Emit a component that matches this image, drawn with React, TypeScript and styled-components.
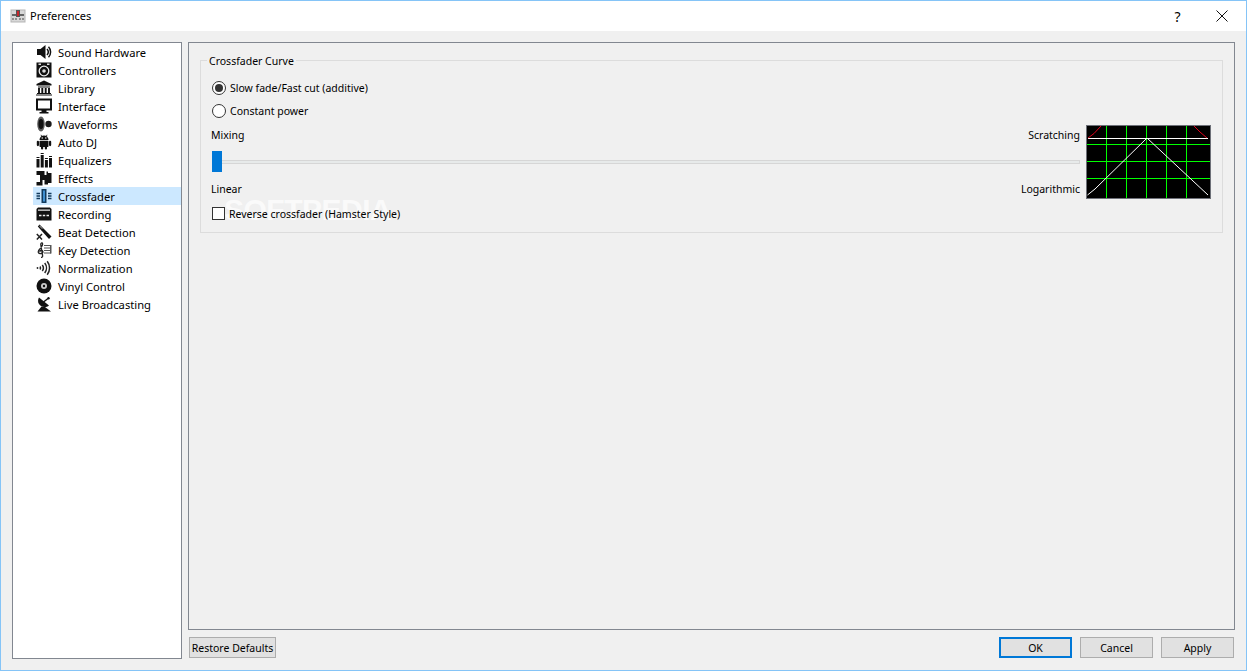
import React from 'react';
import styled, { createGlobalStyle } from 'styled-components';

const GlobalStyle = createGlobalStyle`
  html, body {
    margin: 0;
    padding: 0;
    background: #f0f0f0;
  }
  * {
    box-sizing: border-box;
  }
`;

const Window = styled.div`
  width: 1247px;
  height: 671px;
  display: flex;
  flex-direction: column;
  border: 1px solid #85c4f7;
  background: #f0f0f0;
  color: #000;
  font-family: 'Noto Sans', 'Open Sans', sans-serif;
  font-size: 10.5px;
  overflow: hidden;
`;

const TitleBar = styled.div`
  height: 30px;
  flex: none;
  display: flex;
  align-items: center;
  background: #fff;
  padding: 0 2px 0 9px;
`;

const TitleText = styled.span`
  margin: 0 0 2px 4px;
  flex: 1;
  font-size: 11px;
`;

const TitleButton = styled.div<{ $narrow?: boolean }>`
  width: ${({ $narrow }) => ($narrow ? '43px' : '45px')};
  height: 30px;
  display: flex;
  align-items: center;
  justify-content: center;
  font-size: 14px;
`;

const Body = styled.div`
  flex: 1;
  display: flex;
  gap: 6px;
  padding: 11px;
  min-height: 0;
`;

const TreeList = styled.div`
  width: 170px;
  flex: none;
  background: #fff;
  border: 1px solid #828790;
  font-size: 11.2px;
`;

const TreeRow = styled.div<{ $selected?: boolean }>`
  height: 18px;
  margin-left: 20px;
  padding-left: 3px;
  display: flex;
  align-items: center;
  gap: 6px;
  background: ${({ $selected }) => ($selected ? '#cce8ff' : 'transparent')};
`;

const RowIcon = styled.svg`
  width: 16px;
  height: 16px;
  flex: none;
  display: block;
`;

const RowLabel = styled.span`
  white-space: nowrap;
`;

const RightColumn = styled.div`
  flex: 1;
  display: flex;
  flex-direction: column;
  gap: 7px;
  min-width: 0;
`;

const Panel = styled.div`
  flex: 1;
  border: 1px solid #828790;
  padding: 17px 11px 0;
`;

const GroupBox = styled.div`
  position: relative;
  height: 173px;
  border: 1px solid #dcdcdc;
  padding: 15px 11px 0 10px;
`;

const GroupTitle = styled.span`
  position: absolute;
  top: -8px;
  left: 6px;
  padding: 0 2px;
  line-height: 16px;
  background: #f0f0f0;
`;

const Watermark = styled.span`
  position: absolute;
  left: 23px;
  top: 137px;
  font-family: 'Liberation Sans', sans-serif;
  font-weight: 700;
  font-size: 30px;
  line-height: 24px;
  letter-spacing: -0.5px;
  color: rgba(255, 255, 255, 0.7);
  pointer-events: none;
`;

const OptionRow = styled.div`
  height: 23px;
  display: flex;
  align-items: center;
  gap: 4px;
  margin-left: 1px;
`;

const RadioCircle = styled.span<{ $checked?: boolean }>`
  width: 14px;
  height: 14px;
  flex: none;
  display: flex;
  align-items: center;
  justify-content: center;
  border-radius: 50%;
  border: 1px solid #333;
  background: #fff;

  &::after {
    content: '';
    width: 8px;
    height: 8px;
    border-radius: 50%;
    background: #333;
    display: ${({ $checked }) => ($checked ? 'block' : 'none')};
  }
`;

const CurveRow = styled.div`
  display: flex;
  gap: 6px;
  margin-top: 3px;
`;

const SliderColumn = styled.div`
  flex: 1;
  min-width: 0;
  display: flex;
  flex-direction: column;
`;

const LabelRow = styled.div`
  height: 20px;
  display: flex;
  align-items: center;
  justify-content: space-between;
`;

const SliderBox = styled.div`
  position: relative;
  height: 21px;
  margin: 6px 0 7px;
  display: flex;
  align-items: center;
`;

const SliderGroove = styled.div`
  flex: 1;
  height: 4px;
  margin-left: 1px;
  background: #e7eaea;
  border: 1px solid #d6d6d6;
`;

const SliderThumb = styled.div`
  position: absolute;
  left: 1px;
  top: 0;
  width: 10px;
  height: 21px;
  background: #0078d7;
`;

const CurveChart = styled.svg`
  width: 125px;
  height: 74px;
  flex: none;
  display: block;
  background: #000;
  border: 1px solid #6d7078;
`;

const CheckRow = styled.div`
  position: relative;
  height: 21px;
  margin: 4px 0 0 1px;
  display: flex;
  align-items: center;
  gap: 4px;
`;

const CheckBox = styled.span`
  width: 13px;
  height: 13px;
  flex: none;
  background: #fff;
  border: 1px solid #333;
`;

const ButtonBar = styled.div`
  height: 22px;
  flex: none;
  display: flex;
  gap: 8px;
  padding: 0 1px;
`;

const PushButton = styled.button<{ $wide?: boolean; $primary?: boolean }>`
  width: ${({ $wide }) => ($wide ? '87px' : '73px')};
  height: 21px;
  padding: 0;
  font: inherit;
  color: #000;
  background: #e1e1e1;
  border: ${({ $primary }) => ($primary ? '2px solid #0078d7' : '1px solid #adadad')};
  white-space: nowrap;
`;

const Spacer = styled.div`
  flex: 1;
`;

const AppIcon = () => (
  <RowIcon viewBox="0 0 16 16">
    <rect x="1" y="2" width="14" height="12" fill="#d8d8d8" stroke="#b5b5b5" />
    <rect x="2" y="6" width="12" height="2" fill="#666" />
    <rect x="6" y="2" width="4" height="7" fill="#555" />
    <rect x="7" y="3" width="2" height="5" fill="#c8262c" />
    <path d="M2 11h2M5 11h2M9 11h2M12 11h2" stroke="#777" strokeWidth="1.5" />
  </RowIcon>
);

const icons: Record<string, React.ReactNode> = {
  speaker: (
    <>
      <path d="M1 5h3.500L9.500 1v14l-5-4H1z" fill="#111" />
      <path d="M11 5a4.500 4.500 0 0 1 0 6M12.500 2.800a7.500 7.500 0 0 1 0 10.400" fill="none" stroke="#111" strokeWidth="1.500" />
    </>
  ),
  controller: (
    <>
      <rect x="0.500" y="0.500" width="15" height="15" fill="#111" />
      <circle cx="8" cy="9" r="4.800" fill="none" stroke="#eee" strokeWidth="1.300" />
      <circle cx="8" cy="9" r="1.800" fill="#ddd" />
      <rect x="2.500" y="1.500" width="2.500" height="1.500" fill="#ddd" />
      <rect x="11" y="1.500" width="2.500" height="1.500" fill="#ddd" />
    </>
  ),
  library: (
    <>
      <path d="M8 .5 15.500 4v1.500H.5V4z" fill="#111" />
      <path d="M2 6.500h12v1H2zM1 13h14v1H1zM0 14.500h16v1H0z" fill="#111" />
      <path d="M3 8v5M6.300 8v5M9.700 8v5M13 8v5" stroke="#111" strokeWidth="1.900" />
    </>
  ),
  monitor: (
    <>
      <rect x="1" y="1.500" width="14" height="10" fill="#fff" stroke="#111" strokeWidth="2" />
      <path d="M5.500 12h5v2h2v1.500h-9V14h2z" fill="#111" />
    </>
  ),
  wave: (
    <>
      <ellipse cx="5" cy="8" rx="3.800" ry="7.500" fill="#333" opacity="0.8" />
      <ellipse cx="5" cy="8" rx="2.500" ry="5" fill="#111" />
      <circle cx="12.500" cy="8" r="3.200" fill="#1a1a1a" />
    </>
  ),
  android: (
    <>
      <path d="M3.500 6a4.500 4.500 0 0 1 9 0z" fill="#111" />
      <path d="M5 .8 6 3M11 .8 10 3" stroke="#111" strokeWidth="0.800" />
      <circle cx="6.200" cy="4" r="0.700" fill="#fff" />
      <circle cx="9.800" cy="4" r="0.700" fill="#fff" />
      <rect x="3.500" y="6.700" width="9" height="6.300" rx="0.800" fill="#111" />
      <rect x="0.800" y="6.700" width="2.200" height="5.500" rx="1.100" fill="#111" />
      <rect x="13" y="6.700" width="2.200" height="5.500" rx="1.100" fill="#111" />
      <rect x="5" y="12" width="2.200" height="3.500" rx="1.100" fill="#111" />
      <rect x="8.800" y="12" width="2.200" height="3.500" rx="1.100" fill="#111" />
    </>
  ),
  equalizer: (
    <>
      <path d="M.5 7h3v8.500h-3zM4.700 3h3v12.500h-3zM8.900 8h3v7.500h-3zM13 6h3v9.500h-3z" fill="#111" />
      <path d="M.5 5h3v1h-3zM4.700 1h3v1h-3zM8.900 6h3v1h-3zM13 4h3v1h-3z" fill="#111" />
    </>
  ),
  effects: (
    <path d="M.5 1h8v4h2V1.500H12V3h3.500v10H12v1.500H8.500V10h-2v5.500h-6V12H4V5H.5z" fill="#111" />
  ),
  crossfader: (
    <>
      <rect x="5.500" y="1" width="5" height="14" fill="#123a5c" />
      <rect x="7" y="2.500" width="2" height="11" fill="#3f8fd0" />
      <path d="M.5 5.500h3.500M.5 8h3.500M.5 10.500h3.500M12 5.500h3.500M12 8h3.500M12 10.500h3.500" stroke="#123a5c" strokeWidth="1.400" />
    </>
  ),
  recording: (
    <>
      <path d="M2 1.500h12l1.500 1.500v11.500H.5V3z" fill="#111" />
      <rect x="2" y="3.500" width="12" height="1.300" fill="#ddd" />
      <path d="M3 9.500h2.500M6.800 9.500h2.400M10.500 9.500H13" stroke="#eee" strokeWidth="1.600" />
    </>
  ),
  beat: (
    <>
      <path d="M3.500 .5 15.500 12.500 13 15 1.800 2.500z" fill="#111" />
      <path d="M3.500 1.800 6.300 4.800" stroke="#bbb" strokeWidth="1" />
      <path d="M.8 10 6 15.500M6 10 .8 15.500" stroke="#222" strokeWidth="1.500" />
    </>
  ),
  key: (
    <>
      <path
        d="M5 15.500c1.500 0 1.800-1 1.500-2.500L4.800 2.800C4.600 1 6 .3 6.500 1.500c.5 1.500-.7 3.300-2.300 5C2.700 8 2 9 2.300 10.300c.4 1.500 2.800 1.800 4 .8 1-.9.600-3-1-3-1.200 0-1.700 1.300-1 2"
        fill="none"
        stroke="#222"
        strokeWidth="1.300"
      />
      <path d="M8 3.500h7M8 6h7M8 8.500h7M8 11h7" stroke="#555" strokeWidth="1.200" />
      <rect x="14" y="3" width="1.500" height="8.500" fill="#555" />
    </>
  ),
  normalization: (
    <>
      <circle cx="1.500" cy="8" r="0.900" fill="#222" />
      <path
        d="M4 6.500a2.500 2.500 0 0 1 0 3M6.300 5a5 5 0 0 1 0 6M8.700 3a8 8 0 0 1 0 10M11.200 1.200a11 11 0 0 1 0 13.600"
        fill="none"
        stroke="#222"
        strokeWidth="1.500"
      />
    </>
  ),
  vinyl: (
    <>
      <circle cx="8" cy="8" r="7.500" fill="#111" />
      <circle cx="8" cy="8" r="3" fill="#ccc" />
      <circle cx="8" cy="8" r="1.200" fill="#111" />
    </>
  ),
  broadcast: (
    <>
      <path d="M3 1.500c-2 3.500-.5 7 2 8.500s5.500 1.500 8-.5z" fill="#111" />
      <path d="M7.500 6 12 2.500" stroke="#111" strokeWidth="1.400" />
      <circle cx="12.500" cy="2.200" r="1.200" fill="#111" />
      <path d="M5.500 10.500 1.500 15.500h13.500L9 11z" fill="#111" />
    </>
  ),
};

const pages = [
  { key: 'speaker', label: 'Sound Hardware' },
  { key: 'controller', label: 'Controllers' },
  { key: 'library', label: 'Library' },
  { key: 'monitor', label: 'Interface' },
  { key: 'wave', label: 'Waveforms' },
  { key: 'android', label: 'Auto DJ' },
  { key: 'equalizer', label: 'Equalizers' },
  { key: 'effects', label: 'Effects' },
  { key: 'crossfader', label: 'Crossfader', selected: true },
  { key: 'recording', label: 'Recording' },
  { key: 'beat', label: 'Beat Detection' },
  { key: 'key', label: 'Key Detection' },
  { key: 'normalization', label: 'Normalization' },
  { key: 'vinyl', label: 'Vinyl Control' },
  { key: 'broadcast', label: 'Live Broadcasting' },
];

const gridColumns = [19.5, 39.5, 59.5, 79.5, 99.5];
const gridRows = [18.5, 35.5, 52.5];

const Curve = () => (
  <CurveChart viewBox="0 0 123 72">
    <g stroke="#00ff00" strokeWidth="1" shapeRendering="crispEdges">
      {gridColumns.map((x) => (
        <line key={x} x1={x} y1="0" x2={x} y2="72" />
      ))}
      {gridRows.map((y) => (
        <line key={y} x1="0" y1={y} x2="123" y2={y} />
      ))}
    </g>
    <line x1="1" y1="12.500" x2="121" y2="12.500" stroke="#fff" shapeRendering="crispEdges" />
    <path d="M.5 69 8 63 60 12l61 57" fill="none" stroke="#fff" strokeWidth="1" />
    <path d="M1 12 7 7.500 14 0M107 0l6 6 7 6" fill="none" stroke="#e0001b" strokeWidth="1" />
  </CurveChart>
);

const App: React.FC = () => {
  return (
    <>
      <GlobalStyle />
      <Window>
        <TitleBar>
          <AppIcon />
          <TitleText>Preferences</TitleText>
          <TitleButton $narrow>?</TitleButton>
          <TitleButton>
            <svg width="12" height="12" viewBox="0 0 12 12">
              <path d="M.5.500l11 11M11.500.500l-11 11" stroke="#111" strokeWidth="1" />
            </svg>
          </TitleButton>
        </TitleBar>
        <Body>
          <TreeList>
            {pages.map((page) => (
              <TreeRow key={page.key} $selected={page.selected}>
                <RowIcon viewBox="0 0 16 16">{icons[page.key]}</RowIcon>
                <RowLabel>{page.label}</RowLabel>
              </TreeRow>
            ))}
          </TreeList>
          <RightColumn>
            <Panel>
              <GroupBox>
                <GroupTitle>Crossfader Curve</GroupTitle>
                <Watermark>SOFTPEDIA</Watermark>
                <OptionRow>
                  <RadioCircle $checked />
                  Slow fade/Fast cut (additive)
                </OptionRow>
                <OptionRow>
                  <RadioCircle />
                  Constant power
                </OptionRow>
                <CurveRow>
                  <SliderColumn>
                    <LabelRow>
                      <span>Mixing</span>
                      <span>Scratching</span>
                    </LabelRow>
                    <SliderBox>
                      <SliderGroove />
                      <SliderThumb />
                    </SliderBox>
                    <LabelRow>
                      <span>Linear</span>
                      <span>Logarithmic</span>
                    </LabelRow>
                  </SliderColumn>
                  <Curve />
                </CurveRow>
                <CheckRow>
                  <CheckBox />
                  Reverse crossfader (Hamster Style)
                </CheckRow>
              </GroupBox>
            </Panel>
            <ButtonBar>
              <PushButton $wide>Restore Defaults</PushButton>
              <Spacer />
              <PushButton $primary>OK</PushButton>
              <PushButton>Cancel</PushButton>
              <PushButton>Apply</PushButton>
            </ButtonBar>
          </RightColumn>
        </Body>
      </Window>
    </>
  );
};

export default App;
